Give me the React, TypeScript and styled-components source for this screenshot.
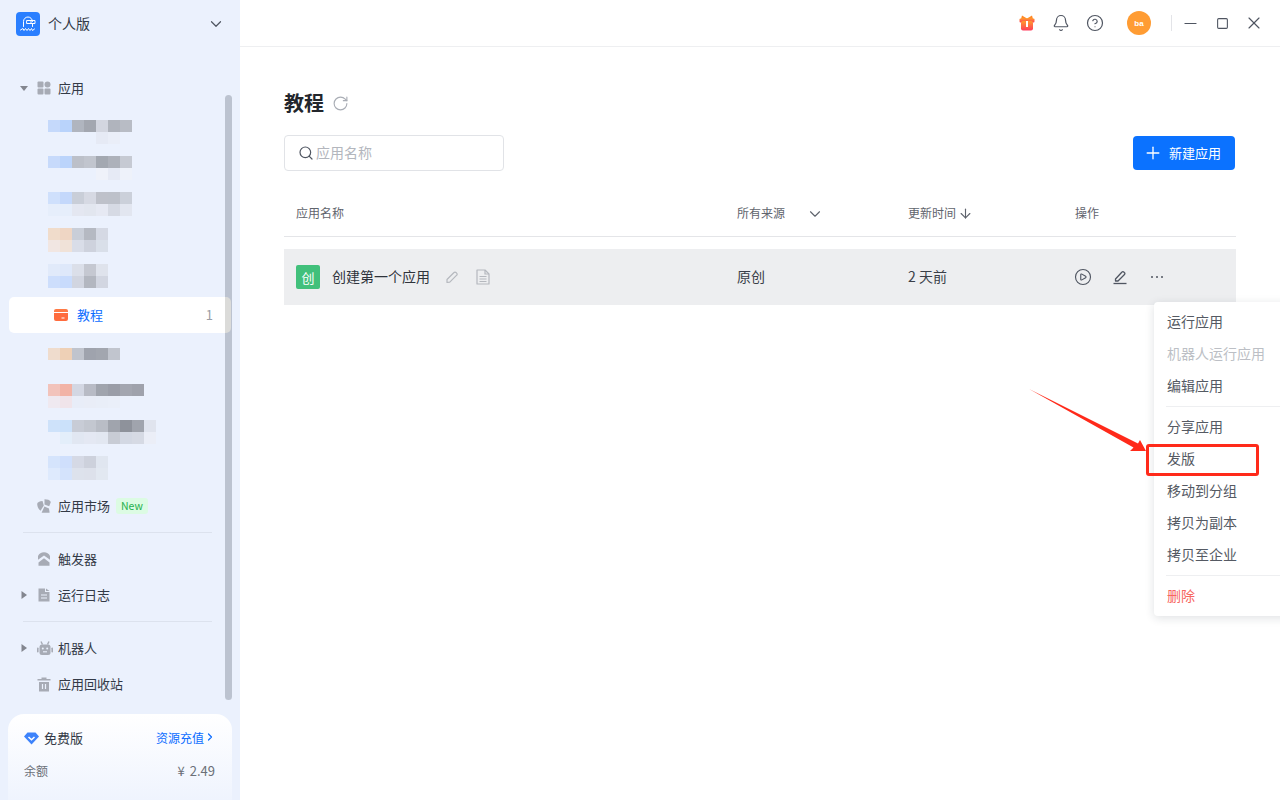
import React from "react";
import styled, { createGlobalStyle } from "styled-components";
import { Bell, ChevronDown, CirclePlay, CircleHelp, Minus, Plus, RotateCw, Search, Square, X, ArrowDown, ChevronRight } from "lucide-react";

const GlobalStyle = createGlobalStyle`
  html, body { margin: 0; padding: 0; height: 100%; overflow: hidden; }
  body { font-family: "Noto Sans CJK SC", "Noto Sans", sans-serif; color: #333a47; background: #fff; }
`;

const Page = styled.div`
  display: flex;
  width: 1280px;
  height: 800px;
  position: relative;
  overflow: hidden;
`;

const Sidebar = styled.aside`
  width: 240px;
  flex: none;
  background: #ebf1fd;
  display: flex;
  flex-direction: column;
  position: relative;
`;

/* the CJK font sits about a pixel low in its line box, this lifts it back */
const Label = styled.span`
  padding-bottom: 2px;
`;

const Brand = styled.div`
  height: 48px;
  display: flex;
  align-items: center;
  padding: 0 15px 0 16px;
  gap: 8px;
  font-size: 14px;
  color: #333a47;
  margin-bottom: 22px;
`;

const BrandName = styled(Label)`
  flex: 1;
`;

const ScrollThumb = styled.div`
  position: absolute;
  left: 225px;
  top: 95px;
  width: 7px;
  height: 605px;
  border-radius: 4px;
  background: #bcc3d0;
`;

const NavRow = styled.div`
  height: 36px;
  display: flex;
  align-items: center;
  font-size: 13px;
  color: #333a47;
  position: relative;
`;

const CaretSlot = styled.div`
  width: 37px;
  flex: none;
  display: flex;
  justify-content: center;
  padding-left: 14px;
  box-sizing: border-box;
  padding-right: 3px;
`;

const IconSlot = styled.div`
  width: 21px;
  flex: none;
  display: flex;
  align-items: center;
`;

const AppsHead = styled.div`
  margin-bottom: 2px;
`;

const TreeBlur = styled.div`
  height: 36px;
  box-sizing: border-box;
  padding: 12px 0 0 48px;
`;

const BlurLine = styled.div`
  display: flex;
  height: 12px;
`;

const BlurCell = styled.div<{ $c: string }>`
  width: 12px;
  height: 12px;
  background: ${(p) => p.$c};
`;

const ActiveRow = styled.div`
  height: 36px;
  margin: 9px 0 3px 9px;
  width: 222px;
  box-sizing: border-box;
  padding: 0 18px 0 45px;
  display: flex;
  align-items: center;
  gap: 9px;
  border-radius: 5px;
  font-size: 13px;
  color: #0b6cff;
  background: linear-gradient(to right, #fff 216px, #dbdbd9 216px);
  position: relative;
  z-index: 2;
`;

const ActiveLabel = styled(Label)`
  flex: 1;
`;

const ActiveCount = styled(Label)`
  font-size: 13px;
  color: #9a9ea6;
`;

const MarketRow = styled(NavRow)`
  margin-top: 8px;
`;

const NewBadge = styled.span`
  margin-left: 6px;
  padding: 0 5px;
  height: 16px;
  line-height: 16px;
  border-radius: 3px;
  font-size: 10.5px;
  background: #dcfbe3;
  color: #25b04d;
`;

const NavDivider = styled.div`
  height: 1px;
  margin: 8px 28px 8px 23px;
  background: #dce2ee;
`;

const PlanCard = styled.div`
  position: absolute;
  left: 8px;
  top: 714px;
  width: 224px;
  height: 86px;
  box-sizing: border-box;
  padding: 13px 16px 0 16px;
  border-radius: 16px 16px 0 0;
  background: linear-gradient(to bottom, #ffffff, #eff4fe);
`;

const PlanRow = styled.div`
  display: flex;
  align-items: center;
  height: 22px;
  font-size: 13px;
  color: #333a47;
`;

const PlanName = styled(Label)`
  flex: 1;
  margin-left: 5px;
`;

const PlanLink = styled(Label)`
  font-size: 12px;
  color: #0b6cff;
  display: flex;
  align-items: center;
`;

const BalanceRow = styled.div`
  display: flex;
  justify-content: space-between;
  align-items: center;
  margin-top: 11px;
  height: 22px;
  font-size: 12px;
  color: #6b7078;
`;

const BalanceValue = styled(Label)`
  font-size: 13px;
  margin-right: 1px;
  word-spacing: 2px;
`;

const Main = styled.main`
  flex: 1;
  display: flex;
  flex-direction: column;
  min-width: 0;
`;

const TitleBar = styled.header`
  height: 46px;
  border-bottom: 1px solid #eeeff1;
  display: flex;
  align-items: center;
  justify-content: flex-end;
  padding-right: 10px;
  color: #4f5561;
`;

const BarIcon = styled.div`
  width: 34px;
  height: 34px;
  display: flex;
  align-items: center;
  justify-content: center;
`;

const WindowIcon = styled(BarIcon)`
  width: 32px;
`;

const Avatar = styled.div`
  width: 24px;
  height: 24px;
  border-radius: 50%;
  background: #ff9c33;
  color: #fff;
  font-size: 8px;
  font-weight: 700;
  font-family: "Liberation Sans", sans-serif;
  display: flex;
  align-items: center;
  justify-content: center;
  margin: 0 20px 0 15px;
`;

const BarDivider = styled.div`
  width: 1px;
  height: 16px;
  background: #e3e4e8;
  margin-right: 2px;
`;

const Content = styled.div`
  padding: 42px 44px 0 44px;
`;

const TitleLine = styled.div`
  display: flex;
  align-items: center;
  gap: 8px;
  height: 28px;
  color: #a9adb5;
`;

const Title = styled.h1`
  margin: 0 0 2px;
  font-size: 20px;
  font-weight: 700;
  color: #23262c;
`;

const Toolbar = styled.div`
  margin-top: 18px;
  display: flex;
  justify-content: space-between;
  align-items: center;
  height: 36px;
`;

const SearchBox = styled.div`
  width: 220px;
  height: 36px;
  box-sizing: border-box;
  border: 1px solid #e1e3e7;
  border-radius: 4px;
  display: flex;
  align-items: center;
  gap: 2px;
  padding-left: 13px;
  font-size: 14px;
  color: #b3b6bd;
`;

const PrimaryButton = styled.button`
  width: 102px;
  height: 34px;
  margin-right: 1px;
  border: 0;
  border-radius: 4px;
  background: #0b72ff;
  color: #fff;
  font: inherit;
  font-size: 13px;
  display: flex;
  align-items: center;
  gap: 6px;
  padding: 0 0 0 10px;
`;

const tableColumns = "453px 171px 167px 1fr";

const TableHead = styled.div`
  margin-top: 20px;
  height: 45px;
  border-bottom: 1px solid #e4e5e8;
  display: grid;
  grid-template-columns: ${tableColumns};
  align-items: center;
  font-size: 12px;
  color: #5f646d;
`;

const HeadCell = styled.div<{ $pad?: boolean }>`
  display: flex;
  align-items: center;
  padding-left: ${(p) => (p.$pad ? "12px" : "0")};
`;

const SortChevron = styled(ChevronDown)`
  margin-left: 21px;
`;

const SortArrow = styled(ArrowDown)`
  margin-left: 2px;
`;

const TableRow = styled.div`
  margin-top: 12px;
  height: 56px;
  background: #edeef0;
  display: grid;
  grid-template-columns: ${tableColumns};
  align-items: center;
  font-size: 14px;
  color: #3a3f48;
`;

const NameCell = styled.div`
  display: flex;
  align-items: center;
  padding-left: 12px;
`;

const AppBadge = styled.div`
  width: 24px;
  height: 24px;
  border-radius: 2px;
  background: #41c07b;
  color: #fff;
  font-size: 13px;
  display: flex;
  align-items: center;
  justify-content: center;
  margin-right: 12px;
`;

const AppName = styled(Label)`
  color: #2f333b;
  margin-right: 15px;
`;

const DocSlot = styled.div`
  margin-left: 17px;
  display: flex;
`;

const ActionCell = styled.div`
  display: flex;
  align-items: center;
  gap: 20px;
  margin-left: -1px;
  color: #4f5561;
`;

const DotsSlot = styled.div`
  margin-left: 2px;
  display: flex;
`;

const Menu = styled.div`
  position: absolute;
  left: 1154px;
  top: 302px;
  width: 140px;
  height: 314px;
  box-sizing: border-box;
  padding-top: 4px;
  background: #fff;
  border-radius: 4px;
  box-shadow: 0 2px 10px rgba(30, 40, 60, 0.14);
  z-index: 3;
`;

const MenuItem = styled.div<{ $tone?: "off" | "danger" }>`
  height: 32px;
  line-height: 30px;
  padding-left: 13px;
  font-size: 14px;
  white-space: nowrap;
  color: ${(p) => (p.$tone === "off" ? "#bcbfc5" : p.$tone === "danger" ? "#f76560" : "#555a63")};
`;

const MenuDivider = styled.div`
  height: 1px;
  margin: 4px 0 4px 12px;
  background: #eeeff1;
`;

const Callout = styled.svg`
  position: absolute;
  left: 1020px;
  top: 380px;
  z-index: 4;
`;

const HighlightBox = styled.div`
  position: absolute;
  left: 1146px;
  top: 444px;
  width: 113px;
  height: 32px;
  box-sizing: border-box;
  border: 3px solid #ff2a1a;
  border-radius: 3px;
  z-index: 4;
`;

const grayIcon = "#a7abb5";

const Caret = ({ open }: { open?: boolean }) => (
  <svg width="10" height="10" viewBox="0 0 10 10">
    <path d={open ? "M1 3h8L5 8z" : "M2.500 1l5.500 4-5.500 4z"} fill="#83868f" />
  </svg>
);

const AppsIcon = () => (
  <svg width="14" height="14" viewBox="0 0 14 14" fill={grayIcon}>
    <rect x="0.500" y="0.500" width="6" height="6" rx="1" />
    <circle cx="10.500" cy="3.500" r="3" />
    <rect x="0.500" y="7.500" width="6" height="6" rx="1" />
    <rect x="7.500" y="7.500" width="6" height="6" rx="1" />
  </svg>
);

const MarketIcon = () => (
  <svg width="14" height="14" viewBox="0 0 14 14" fill={grayIcon}>
    <path d="M7.500 0.300c2.800 0 5.500 .7 6.300 2.600l-1.600 4.400-4.700-1.800z" />
    <path d="M0.200 5C0.200 3.400 2.500 2 5.500 2l1.300 4.500-3.300 5.300C1.500 10.300 0.200 7.500 0.200 5z" />
    <path d="M7.400 7.600l4.600 1.800 .6 4.300H4.600z" />
  </svg>
);

const TriggerIcon = () => (
  <svg width="14" height="14" viewBox="0 0 14 14" fill={grayIcon}>
    <path d="M7 0.300a6.700 6.700 0 0 1 6 3.700v3.800L7 3.600 1 7.800V4a6.700 6.700 0 0 1 6-3.700z" />
    <path d="M7 6.300l5.500 4.200v3.200h-11v-3.200z" />
  </svg>
);

const LogIcon = () => (
  <svg width="14" height="14" viewBox="0 0 14 14">
    <path d="M1.500 0.500h6.500v3.500h4.500v9.500h-11z" fill={grayIcon} />
    <path d="M9 0.500l3.500 2.500H9z" fill={grayIcon} />
    <path d="M4 7h6M4 10h6" stroke="#ebf1fd" strokeWidth="1.200" />
  </svg>
);

const RobotIcon = () => (
  <svg width="16" height="15" viewBox="0 0 16 15">
    <path d="M4 0.500l1.500 3M12 0.500l-1.500 3" stroke={grayIcon} strokeWidth="1.400" />
    <rect x="2.500" y="3.500" width="11" height="10.500" rx="2.500" fill={grayIcon} />
    <rect x="0" y="6.500" width="1.600" height="5" rx="0.800" fill={grayIcon} />
    <rect x="14.400" y="6.500" width="1.600" height="5" rx="0.800" fill={grayIcon} />
    <circle cx="5.800" cy="7.500" r="1" fill="#ebf1fd" />
    <circle cx="10.200" cy="7.500" r="1" fill="#ebf1fd" />
    <path d="M6 10.800h4" stroke="#ebf1fd" strokeWidth="1.100" />
  </svg>
);

const TrashIcon = () => (
  <svg width="14" height="15" viewBox="0 0 14 15" fill={grayIcon}>
    <path d="M4.500 0.500h5v1.500h4v1.500H0.500V2h4z" />
    <path d="M2 5h10v9.500H2z" />
    <path d="M5.500 7v5M8.500 7v5" stroke="#ebf1fd" strokeWidth="1.200" />
  </svg>
);

const LogoIcon = () => (
  <svg width="24" height="24" viewBox="0 0 24 24">
    <rect width="24" height="24" rx="4" fill="#2a7fff" />
    <path
      d="M7.500 14.500V9.500a4.500 4.500 0 0 1 9 0M16.500 12v2.500M4.500 18l2.500-1.500 1 2 1.500-2 1.500 2 1.500-2 1.500 2 1.500-2 1 2 2-1.500M11 8.500h8v3h-8zM15 8.500v3"
      fill="none"
      stroke="#fff"
      strokeWidth="1"
      strokeLinecap="round"
      strokeLinejoin="round"
    />
  </svg>
);

const CardIcon = () => (
  <svg width="14" height="12" viewBox="0 0 14 12">
    <path d="M2 0h10a2 2 0 0 1 2 2v1H0V2a2 2 0 0 1 2-2z" fill="#ff7a45" />
    <path d="M0 4h14v6a2 2 0 0 1-2 2H2a2 2 0 0 1-2-2z" fill="#ff6c3e" />
    <rect x="7.500" y="8.500" width="3" height="1" fill="#fff" />
  </svg>
);

const DiamondIcon = () => (
  <svg width="15" height="13" viewBox="0 0 15 13">
    <path d="M3.500 0.500h8l3.500 4-7.500 8L0 4.500z" fill="#3d83fb" />
    <path d="M4.500 5l3 2.800 3-2.800" fill="none" stroke="#fff" strokeWidth="1.500" />
  </svg>
);

const GiftIcon = () => (
  <svg width="16" height="16" viewBox="0 0 16 16">
    <defs>
      <linearGradient id="giftFill" x1="0" y1="0" x2="0" y2="1">
        <stop offset="0" stopColor="#ff9a2e" />
        <stop offset="1" stopColor="#ff3b5c" />
      </linearGradient>
    </defs>
    <path d="M3 0.500l5 3 5-3 1 3.500H2z" fill="#ff8a26" />
    <rect x="0.500" y="3.500" width="15" height="4" rx="1" fill="url(#giftFill)" />
    <rect x="2" y="6" width="12" height="9.500" rx="2" fill="url(#giftFill)" />
    <rect x="7" y="6" width="2" height="6" fill="#fff" />
  </svg>
);

const PencilIcon = () => (
  <svg width="14" height="14" viewBox="0 0 14 14" fill="none" stroke="#b5b8be" strokeWidth="1.200" strokeLinejoin="round">
    <path d="M2 9.500L9 2.500a1.300 1.300 0 0 1 2 0l.7.700a1.300 1.300 0 0 1 0 2L4.800 12.200 2 12.500z" />
  </svg>
);

const DocIcon = () => (
  <svg width="14" height="16" viewBox="0 0 14 16" fill="none" stroke="#b5b8be" strokeWidth="1.200">
    <path d="M1 1h8l4 4v10H1z" strokeLinejoin="round" />
    <path d="M9 1v4h4M3.500 7.500h7M3.500 10h7M3.500 12.500h7" />
  </svg>
);

const EditLineIcon = () => (
  <svg width="16" height="16" viewBox="0 0 16 16" fill="none" stroke="#4f5561" strokeWidth="1.300" strokeLinejoin="round">
    <path d="M3.500 10L10 3a1.200 1.200 0 0 1 1.800 0l.7.700a1.200 1.200 0 0 1 0 1.800L6 12H3.500z" />
    <path d="M1.500 14.500h13" />
  </svg>
);

const DotsIcon = () => (
  <svg width="14" height="14" viewBox="0 0 14 14" fill="#4f5561">
    <circle cx="2" cy="7" r="1" />
    <circle cx="7" cy="7" r="1" />
    <circle cx="12" cy="7" r="1" />
  </svg>
);

const blurredRows: string[][][] = [
  [
    ["#c5d9fb", "#b9d3fb", "#b0b5bf", "#a3a7b0", "#d3d6e0", "#b0b4bd", "#b8bcc5"],
    ["#ebf1fd", "#ebf1fd", "#ebf1fd", "#ebf1fd", "#e6eaf5", "#eaeef8"],
  ],
  [
    ["#c7dafb", "#bbd4fb", "#bcc0c9", "#c1c5ce", "#a3a8b1", "#adb1ba", "#c6cad3"],
    ["#ebf1fd", "#ebf1fd", "#ebf1fd", "#ebf1fd", "#eff2fa", "#e6eaf5", "#eef2fa"],
  ],
  [
    ["#cfe0fc", "#c4d8fb", "#c9ced8", "#d6d9e3", "#bec1ca", "#bdc1ca", "#cbd0da"],
    ["#e6eefb", "#e6eefb", "#e4e7f1", "#e2e6ef", "#e6e9f3", "#d6dae4", "#e2e6f0"],
  ],
  [
    ["#f0dccb", "#efd6c4", "#c9ced8", "#b5b9c2", "#d5d9e4"],
    ["#f1e6e2", "#f0e2d8", "#d9dde8", "#ced2dd", "#d9dfe9"],
  ],
  [
    ["#e1eafa", "#dee8fa", "#dbdfe9", "#c5c8d1", "#dfe3ec"],
    ["#cddefc", "#c8dbfc", "#d1d5e0", "#b3b7c0", "#d2d6e1"],
  ],
];

const blurredRowsLower: string[][][] = [
  [["#efdccd", "#eed0b6", "#c0c4cd", "#9fa3ad", "#a2a6af", "#c1c5ce"]],
  [
    ["#f2c3bb", "#f2b3a6", "#d3d7e3", "#b8bbc5", "#a0a4ad", "#9a9da7", "#a3a6b0", "#9fa2ac"],
    ["#efe9f0", "#f0e4ea", "#e8edf8", "#e9edf7", "#e9eef8", "#eaeff9"],
  ],
  [
    ["#cee2fa", "#cbe1fa", "#c8ccd6", "#c3c7d0", "#b9bdc6", "#a0a4ad", "#8e929b", "#a0a4ad", "#e0e4ee"],
    ["#ebf1fd", "#e3eefa", "#e1e7f2", "#e4e8f3", "#e2e7f1", "#c8ccd5", "#d3d8e3", "#d6dae4", "#ebeef7"],
  ],
  [
    ["#d5e4fc", "#cfdffc", "#d5d9e5", "#cdd1dc", "#e0e6f0"],
    ["#deeafd", "#d4e3fc", "#dde2ec", "#dde1eb", "#e2e8f1"],
  ],
];

const Blurred = ({ rows }: { rows: string[][] }) => (
  <TreeBlur>
    {rows.map((line, i) => (
      <BlurLine key={i}>
        {line.map((c, j) => (
          <BlurCell key={j} $c={c} />
        ))}
      </BlurLine>
    ))}
  </TreeBlur>
);

const Item = ({ caret, icon, label }: { caret?: "open" | "closed"; icon: React.ReactNode; label: string }) => (
  <NavRow>
    <CaretSlot>{caret && <Caret open={caret === "open"} />}</CaretSlot>
    <IconSlot>{icon}</IconSlot>
    <Label>{label}</Label>
  </NavRow>
);

export default function App() {
  return (
    <Page>
      <GlobalStyle />
      <Sidebar>
        <Brand>
          <LogoIcon />
          <BrandName>个人版</BrandName>
          <ChevronDown size={18} strokeWidth={1.6} color="#4f5561" />
        </Brand>
        <AppsHead>
          <Item caret="open" icon={<AppsIcon />} label="应用" />
        </AppsHead>
        {blurredRows.map((rows, i) => (
          <Blurred key={i} rows={rows} />
        ))}
        <ActiveRow>
          <CardIcon />
          <ActiveLabel>教程</ActiveLabel>
          <ActiveCount>1</ActiveCount>
        </ActiveRow>
        {blurredRowsLower.map((rows, i) => (
          <Blurred key={i} rows={rows} />
        ))}
        <MarketRow>
          <CaretSlot />
          <IconSlot>
            <MarketIcon />
          </IconSlot>
          <Label>应用市场</Label>
          <NewBadge>New</NewBadge>
        </MarketRow>
        <NavDivider />
        <Item icon={<TriggerIcon />} label="触发器" />
        <Item caret="closed" icon={<LogIcon />} label="运行日志" />
        <NavDivider />
        <Item caret="closed" icon={<RobotIcon />} label="机器人" />
        <Item icon={<TrashIcon />} label="应用回收站" />
        <ScrollThumb />
        <PlanCard>
          <PlanRow>
            <DiamondIcon />
            <PlanName>免费版</PlanName>
            <PlanLink>
              资源充值
              <ChevronRight size={12} strokeWidth={2.4} />
            </PlanLink>
          </PlanRow>
          <BalanceRow>
            <Label>余额</Label>
            <BalanceValue>¥ 2.49</BalanceValue>
          </BalanceRow>
        </PlanCard>
      </Sidebar>
      <Main>
        <TitleBar>
          <BarIcon>
            <GiftIcon />
          </BarIcon>
          <BarIcon>
            <Bell size={18} strokeWidth={1.6} />
          </BarIcon>
          <BarIcon>
            <CircleHelp size={18} strokeWidth={1.6} />
          </BarIcon>
          <Avatar>ba</Avatar>
          <BarDivider />
          <WindowIcon>
            <Minus size={19} strokeWidth={1.4} />
          </WindowIcon>
          <WindowIcon>
            <Square size={13} strokeWidth={2} />
          </WindowIcon>
          <WindowIcon>
            <X size={20} strokeWidth={1.4} />
          </WindowIcon>
        </TitleBar>
        <Content>
          <TitleLine>
            <Title>教程</Title>
            <RotateCw size={17} strokeWidth={1.6} />
          </TitleLine>
          <Toolbar>
            <SearchBox>
              <Search size={16} color="#4f5561" strokeWidth={1.8} />
              <Label>应用名称</Label>
            </SearchBox>
            <PrimaryButton>
              <Plus size={20} strokeWidth={1.6} />
              <Label>新建应用</Label>
            </PrimaryButton>
          </Toolbar>
          <TableHead>
            <HeadCell $pad>
              <Label>应用名称</Label>
            </HeadCell>
            <HeadCell>
              <Label>所有来源</Label>
              <SortChevron size={18} strokeWidth={1.5} />
            </HeadCell>
            <HeadCell>
              <Label>更新时间</Label>
              <SortArrow size={15} strokeWidth={1.8} />
            </HeadCell>
            <HeadCell>
              <Label>操作</Label>
            </HeadCell>
          </TableHead>
          <TableRow>
            <NameCell>
              <AppBadge>创</AppBadge>
              <AppName>创建第一个应用</AppName>
              <PencilIcon />
              <DocSlot>
                <DocIcon />
              </DocSlot>
            </NameCell>
            <Label>原创</Label>
            <Label>2 天前</Label>
            <ActionCell>
              <CirclePlay size={18} strokeWidth={1.5} />
              <EditLineIcon />
              <DotsSlot>
                <DotsIcon />
              </DotsSlot>
            </ActionCell>
          </TableRow>
        </Content>
      </Main>
      <Menu>
        <MenuItem>运行应用</MenuItem>
        <MenuItem $tone="off">机器人运行应用</MenuItem>
        <MenuItem>编辑应用</MenuItem>
        <MenuDivider />
        <MenuItem>分享应用</MenuItem>
        <MenuItem>发版</MenuItem>
        <MenuItem>移动到分组</MenuItem>
        <MenuItem>拷贝为副本</MenuItem>
        <MenuItem>拷贝至企业</MenuItem>
        <MenuDivider />
        <MenuItem $tone="danger">删除</MenuItem>
      </Menu>
      <Callout width="130" height="80" viewBox="1020 380 130 80">
        <polygon points="1029,389 1138,443.500 1140,440 1146,451 1130,451 1133.500,447.500" fill="#ff2a1a" />
      </Callout>
      <HighlightBox />
    </Page>
  );
}
